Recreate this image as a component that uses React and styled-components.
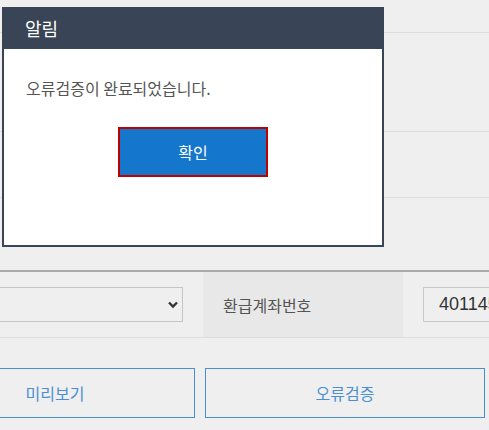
import React from "react";
import styled, { createGlobalStyle } from "styled-components";

const GlobalStyle = createGlobalStyle`
  html, body {
    margin: 0;
    padding: 0;
    background: #efefef;
    overflow: hidden;
  }
  body {
    font-family: "Noto Sans CJK KR", "Noto Sans", "Liberation Sans", sans-serif;
  }
`;

const Page = styled.div`
  position: relative;
  width: 489px;
  height: 430px;
  overflow: hidden;
  background: #efefef;
`;

const Content = styled.div`
  margin-left: -105px;
  width: 800px;
`;

const InfoTable = styled.div`
  display: flex;
  flex-direction: column;
  padding-top: 32px;
  border-bottom: 2px solid #aaaaaa;
`;

const InfoRow = styled.div`
  height: ${(p) => p.h}px;
  border-top: 1px solid #dddddd;
  box-sizing: border-box;
`;

const FormRow = styled.div`
  display: flex;
  height: 66px;
  border-bottom: 1px solid #dddddd;
  box-sizing: border-box;
`;

const Cell = styled.div`
  display: flex;
  align-items: center;
  box-sizing: border-box;
  width: ${(p) => p.w}px;
  padding: 0 20px;
  background: ${(p) => (p.head ? "#e8e8e8" : "transparent")};
  color: #555555;
  font-size: 16px;
`;

const SelectBox = styled.div`
  position: relative;
  flex: 1;
  height: 35px;
  border: 1px solid #c4c4cc;
  box-sizing: border-box;
  background: #efefef;
`;

const Chevron = styled.svg`
  position: absolute;
  right: 3px;
  top: 13px;
`;

const Input = styled.div`
  flex: 1;
  height: 35px;
  border: 1px solid #c8c8c8;
  box-sizing: border-box;
  display: flex;
  align-items: center;
  padding-left: 15px;
  font-family: "Liberation Sans", Arial, sans-serif;
  font-size: 18px;
  color: #333333;
  white-space: nowrap;
  overflow: hidden;
`;

const ButtonRow = styled.div`
  display: flex;
  gap: 10px;
  padding: 30px 0 0 20px;
`;

const OutlineButton = styled.button`
  width: 280px;
  height: 50px;
  border: 1px solid #4b8fd2;
  background: transparent;
  color: #4b8fd2;
  font-family: inherit;
  font-size: 16px;
  padding: 0;
`;

const Dialog = styled.div`
  position: absolute;
  left: 2px;
  top: 7px;
  width: 382px;
  height: 240px;
  box-sizing: border-box;
  border: 2px solid #394457;
  border-top: none;
  background: #ffffff;
  display: flex;
  flex-direction: column;
`;

const DialogHeader = styled.div`
  height: 42px;
  margin: 0 -2px;
  background: #394457;
  color: #ffffff;
  font-size: 18px;
  display: flex;
  align-items: center;
  padding-left: 23px;
`;

const DialogBody = styled.div`
  display: flex;
  flex-direction: column;
  padding: 28px 0 0 22px;
`;

const Message = styled.p`
  margin: 0;
  font-size: 16px;
  line-height: 22px;
  color: #555555;
`;

const ConfirmButton = styled.button`
  align-self: flex-start;
  margin: 28px 0 0 92px;
  width: 150px;
  height: 50px;
  box-sizing: border-box;
  border: 2px solid #c00000;
  background: #1477cc;
  color: #ffffff;
  font-family: inherit;
  font-size: 16px;
  padding: 0;
`;

export default function App() {
  return (
    <Page>
      <GlobalStyle />
      <Content>
        <InfoTable>
          <InfoRow h={99} />
          <InfoRow h={66} />
          <InfoRow h={73} />
        </InfoTable>
        <FormRow>
          <Cell w={308}>
            <SelectBox>
              <Chevron width="12" height="8" viewBox="0 0 12 8">
                <path d="M2 1.5 L6 5.5 L10 1.5" fill="none" stroke="#333" strokeWidth="2.4" />
              </Chevron>
            </SelectBox>
          </Cell>
          <Cell w={200} head>
            환급계좌번호
          </Cell>
          <Cell w={292}>
            <Input>40114556677</Input>
          </Cell>
        </FormRow>
        <ButtonRow>
          <OutlineButton>미리보기</OutlineButton>
          <OutlineButton>오류검증</OutlineButton>
        </ButtonRow>
      </Content>
      <Dialog>
        <DialogHeader>알림</DialogHeader>
        <DialogBody>
          <Message>오류검증이 완료되었습니다.</Message>
          <ConfirmButton>확인</ConfirmButton>
        </DialogBody>
      </Dialog>
    </Page>
  );
}
